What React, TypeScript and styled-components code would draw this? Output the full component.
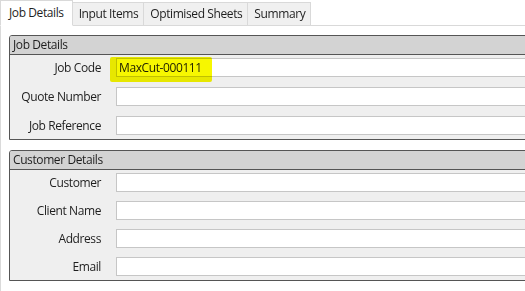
import React from 'react'
import styled, { createGlobalStyle } from 'styled-components'

const GlobalStyle = createGlobalStyle`
  html, body {
    margin: 0;
    padding: 0;
    background: #ffffff;
  }
  body {
    font-family: 'Segoe UI', 'Open Sans', 'Noto Sans', sans-serif;
    font-size: 12px;
    letter-spacing: -0.4px;
    color: #1e1e1e;
  }
`

const Page = styled.div`
  width: 525px;
  height: 291px;
  overflow: hidden;
  background: #ffffff;
  display: flex;
  flex-direction: column;
`

const TabStrip = styled.div`
  display: flex;
  align-items: flex-end;
  height: 26px;
  border-bottom: 1px solid #d9d9d9;
  box-sizing: border-box;
  flex: none;
`

const Tab = styled.div<{ active?: boolean }>`
  box-sizing: border-box;
  height: ${({ active }) => (active ? '26px' : '24px')};
  margin-bottom: -1px;
  padding: ${({ active }) => (active ? '0 8px 1px 8px' : '0 5px 1px 6px')};
  display: flex;
  align-items: center;
  background: ${({ active }) => (active ? '#ffffff' : '#f0f0f0')};
  border: 1px solid #d9d9d9;
  border-bottom: ${({ active }) => (active ? '1px solid #ffffff' : '1px solid #d9d9d9')};
  margin-left: ${({ active }) => (active ? '0' : '-1px')};
  white-space: nowrap;
  position: relative;
  z-index: ${({ active }) => (active ? 1 : 0)};
`

const Panel = styled.div`
  flex: 1;
  border-left: 1px solid #dadada;
  padding: 9px 0 0 8px;
  display: flex;
  flex-direction: column;
  gap: 10px;
`

const GroupBox = styled.div`
  width: 640px;
  border: 1px solid #555555;
  border-radius: 3px 3px 0 0;
  background: #efefef;
  flex: none;
`

const GroupHeader = styled.div`
  height: 18px;
  line-height: 18px;
  padding-left: 3px;
  background: #d3d3d3;
  border-bottom: 1px solid #555555;
  border-radius: 2px 2px 0 0;
`

const FieldList = styled.div<{ rowGap: number }>`
  display: flex;
  flex-direction: column;
  gap: ${({ rowGap }) => rowGap}px;
  padding: 3px 0 4px;
`

const FieldRow = styled.div`
  display: grid;
  grid-template-columns: 91px 1fr;
  column-gap: 15px;
  align-items: center;
  position: relative;
`

const Label = styled.label`
  text-align: right;
  white-space: nowrap;
`

const Input = styled.div`
  height: 19px;
  box-sizing: border-box;
  border: 1px solid #c6c6c6;
  background: #ffffff;
  padding-left: 2px;
  line-height: 17px;
  position: relative;
`

const Highlight = styled.span`
  position: absolute;
  left: -7px;
  top: -2px;
  width: 102px;
  height: 25px;
  border-radius: 2px;
  background: #f7f700;
  mix-blend-mode: multiply;
  pointer-events: none;
`

type Field = { label: string; value?: string; highlight?: boolean }

const jobFields: Field[] = [
  { label: 'Job Code', value: 'MaxCut-000111', highlight: true },
  { label: 'Quote Number' },
  { label: 'Job Reference' },
]

const customerFields: Field[] = [
  { label: 'Customer' },
  { label: 'Client Name' },
  { label: 'Address' },
  { label: 'Email' },
]

const Group = ({ title, fields, rowGap }: { title: string; fields: Field[]; rowGap: number }) => (
  <GroupBox>
    <GroupHeader>{title}</GroupHeader>
    <FieldList rowGap={rowGap}>
      {fields.map((f) => (
        <FieldRow key={f.label}>
          <Label>{f.label}</Label>
          <Input>
            {f.value}
            {f.highlight && <Highlight />}
          </Input>
        </FieldRow>
      ))}
    </FieldList>
  </GroupBox>
)

export default function App() {
  return (
    <Page>
      <GlobalStyle />
      <TabStrip>
        <Tab active>Job Details</Tab>
        <Tab>Input Items</Tab>
        <Tab>Optimised Sheets</Tab>
        <Tab>Summary</Tab>
      </TabStrip>
      <Panel>
        <Group title="Job Details" fields={jobFields} rowGap={10} />
        <Group title="Customer Details" fields={customerFields} rowGap={9} />
      </Panel>
    </Page>
  )
}
